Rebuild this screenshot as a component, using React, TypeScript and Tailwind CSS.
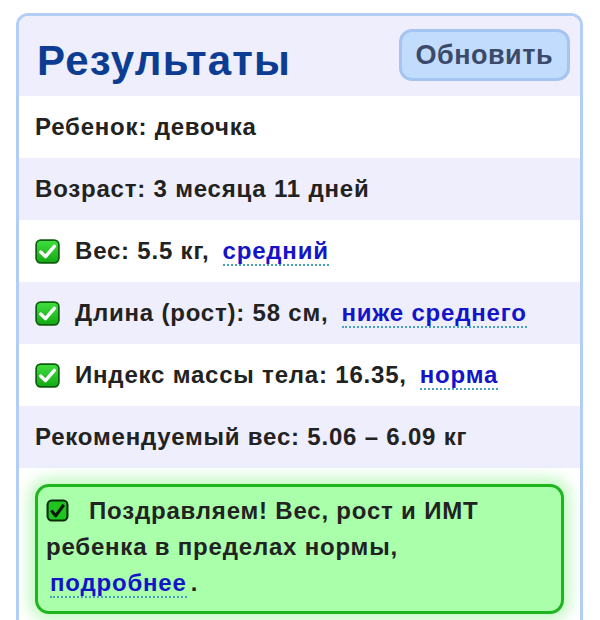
import React from "react";

const font = { fontFamily: '"Liberation Sans", Arial, sans-serif' };

function GreenCheck() {
  return (
    <svg width="25" height="25" viewBox="0 0 22 22" className="shrink-0">
      <defs>
        <linearGradient id="gc" x1="0" y1="0" x2="0" y2="1">
          <stop offset="0" stopColor="#3fe03f" />
          <stop offset="1" stopColor="#14a814" />
        </linearGradient>
      </defs>
      <rect x="1" y="1" width="20" height="20" rx="4" fill="url(#gc)" stroke="#0d5e0d" strokeWidth="1.5" />
      <path d="M5 11.5 L9.2 15.5 L17 6.5" fill="none" stroke="#fff" strokeWidth="3" strokeLinecap="round" strokeLinejoin="round" />
    </svg>
  );
}

function BallotCheck() {
  return (
    <svg width="23" height="23" viewBox="0 0 22 22" className="shrink-0">
      <rect x="1.5" y="1.5" width="19" height="19" rx="4" fill="#1fc41f" stroke="#0a2a0a" strokeWidth="2" />
      <path d="M5 11 L9.3 16 L17 5.5" fill="none" stroke="#0a1a0a" strokeWidth="3" strokeLinejoin="round" />
    </svg>
  );
}

function Link({ children }: { children: React.ReactNode }) {
  return (
    <span className="text-[#1414c8] border-b-2 border-dotted border-[#4aa0c0] leading-[1.1]">{children}</span>
  );
}

export default function App() {
  const rows: { bg: string; content: React.ReactNode }[] = [
    { bg: "bg-white", content: <span>Ребенок: девочка</span> },
    { bg: "bg-[#eeeefc]", content: <span>Возраст: 3 месяца 11 дней</span> },
    {
      bg: "bg-white",
      content: (
        <span className="flex items-center">
          <GreenCheck />
          <span className="ml-[15px]">Вес: 5.5 кг,</span>
          <span className="ml-[13px]"><Link>средний</Link></span>
        </span>
      ),
    },
    {
      bg: "bg-[#eeeefc]",
      content: (
        <span className="flex items-center">
          <GreenCheck />
          <span className="ml-[15px]">Длина (рост): 58 см,</span>
          <span className="ml-[13px]"><Link>ниже среднего</Link></span>
        </span>
      ),
    },
    {
      bg: "bg-white",
      content: (
        <span className="flex items-center">
          <GreenCheck />
          <span className="ml-[15px]">Индекс массы тела: 16.35,</span>
          <span className="ml-[13px]"><Link>норма</Link></span>
        </span>
      ),
    },
    { bg: "bg-[#eeeefc]", content: <span>Рекомендуемый вес: 5.06 – 6.09 кг</span> },
  ];

  return (
    <div className="w-[600px] h-[620px] bg-white overflow-hidden" style={font}>
      <div className="ml-[16px] mt-[13px] w-[567px] border-[3px] border-b-0 border-[#b2cdf6] rounded-t-[12px] overflow-hidden">
        <div className="bg-[#eeeefc] h-[80px] flex items-center justify-between pl-[18px] pr-[10px]">
          <h1 className="text-[42px] font-bold text-[#0d3d92] tracking-[1.2px] mt-[10px] leading-none">Результаты</h1>
          <button className="h-[52px] px-[14px] rounded-[13px] bg-[#c2dcfd] border-[3px] border-[#a6c4f2] text-[27px] font-bold text-[#3b4a6b] tracking-[0.5px] mb-[2px] leading-none">
            Обновить
          </button>
        </div>
        {rows.map((r, i) => (
          <div key={i} className={`${r.bg} h-[62px] flex items-center pl-[16px] text-[24px] tracking-[0.8px] font-bold text-[#222]`}>
            {r.content}
          </div>
        ))}
        <div className="bg-white pt-[16px] pb-[10px] px-[16px]">
          <div className="rounded-[14px] border-[3px] border-[#1fb51f] bg-[#aaffaa] shadow-[0_0_14px_6px_rgba(120,240,120,0.45)] px-[8px] pt-[6px] pb-[10px] text-[24px] tracking-[0.8px] font-bold text-[#222] leading-[36px]">
            <span className="inline-flex align-middle mr-[20px] -mt-[4px]"><BallotCheck /></span>
            Поздравляем! Вес, рост и ИМТ ребенка в пределах нормы,
            <br />
            <span className="ml-[4px]"><Link>подробнее</Link></span>
            <span className="ml-[4px]">.</span>
          </div>
        </div>
      </div>
    </div>
  );
}
